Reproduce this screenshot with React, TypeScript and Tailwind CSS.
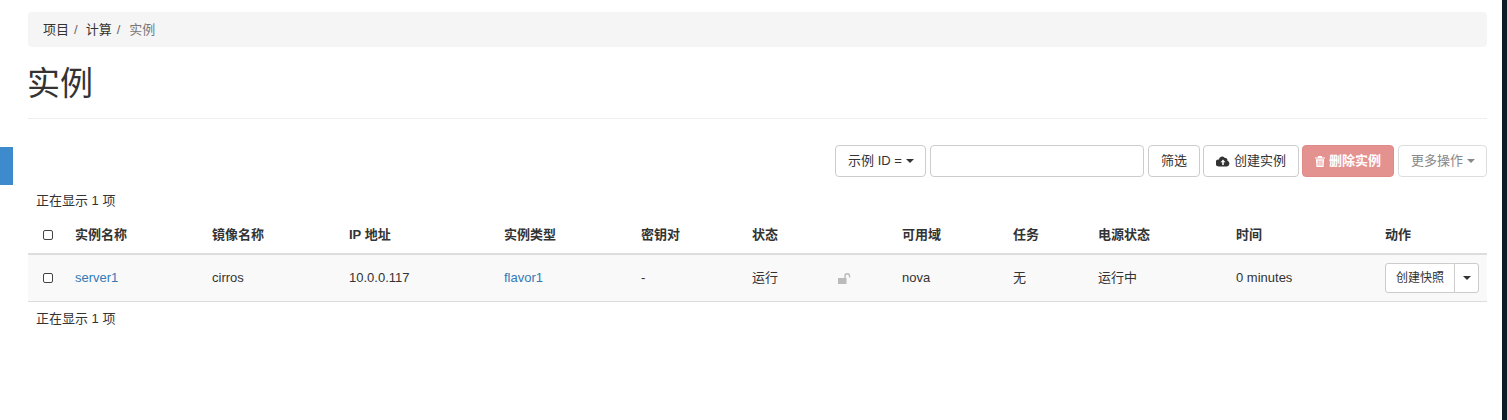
import React from 'react';

const columns = [
  { label: '实例名称', width: 'w-[137px]' },
  { label: '镜像名称', width: 'w-[137px]' },
  { label: 'IP 地址', width: 'w-[155px]' },
  { label: '实例类型', width: 'w-[137px]' },
  { label: '密钥对', width: 'w-[111px]' },
  { label: '状态', width: 'w-[86px]' },
  { label: '', width: 'w-[64px]' },
  { label: '可用域', width: 'w-[111px]' },
  { label: '任务', width: 'w-[85px]' },
  { label: '电源状态', width: 'w-[138px]' },
  { label: '时间', width: 'w-[149px]' },
  { label: '动作', width: 'w-[102px]' },
];

const Caret = ({ className = '' }: { className?: string }) => (
  <span className={`inline-block w-0 h-0 border-x-[4px] border-x-transparent border-t-[4px] ${className}`} />
);

const Checkbox = () => (
  <span className="block w-[10px] h-[10px] border border-[#444] rounded-[2px] bg-white" />
);

const CloudIcon = () => (
  <svg viewBox="0 0 16 12" className="w-[14px] h-[11px]" fill="#333">
    <path d="M13 5.200A3 3 0 0 0 9.800 1.600 3.600 3.600 0 0 0 3.400 3.800 2.900 2.900 0 0 0 3 11.600h9.600A3.300 3.300 0 0 0 13 5.200Z" />
    <path d="M8 3.600 5.200 6.900h1.900v3h1.800v-3h1.900Z" fill="#fff" />
  </svg>
);

const TrashIcon = () => (
  <svg viewBox="0 0 11 12" className="w-[10px] h-[11px]" fill="#fff">
    <path d="M3.600 0h3.800l.7 1.500H11v1.200H0V1.500h2.900Z" />
    <path d="M1 3.400h9l-.6 8.600H1.600ZM3 4.800v5.800h.9V4.800Zm2.100 0v5.800H6V4.800Zm2.100 0v5.800h.9V4.800Z" fillRule="evenodd" />
  </svg>
);

const UnlockIcon = () => (
  <svg viewBox="0 0 13 11" className="w-[13px] h-[11px]" fill="#bbb">
    <path d="M0 5h8.500v6H0Z" />
    <path d="M6.300 5V3.200a3 3 0 0 1 6-.2v1.600h-1.400V3a1.600 1.600 0 0 0-3.200.2V5Z" />
  </svg>
);

export default function App() {
  return (
    <div className="relative h-[420px] bg-white overflow-hidden font-['Liberation_Sans','Noto_Sans_CJK_SC',sans-serif] text-[13px] text-[#333]">
      {/* side tab and the dark window edge */}
      <div className="absolute left-0 top-[147px] w-[13px] h-[38px] bg-[#3d8bcd]" />
      <div className="absolute right-0 top-0 w-[5px] h-full bg-[#0d1b26]" />

      <div className="pl-[28px] pr-[20px] pt-[12px]">
        <div className="flex items-center h-[35px] px-[15px] bg-[#f5f5f5] rounded-[4px]">
          <span>项目</span>
          <span className="text-[#666] ml-[5px] mr-[8px]">/</span>
          <span>计算</span>
          <span className="text-[#666] ml-[5px] mr-[9px]">/</span>
          <span className="text-[#777]">实例</span>
        </div>

        <div className="mt-[13px] pb-[11px] border-b border-[#eee]">
          <h1 className="text-[33px] leading-[47px] font-normal -ml-px">实例</h1>
        </div>

        <div className="flex justify-end items-center gap-[4px] mt-[26px]">
          <button className="flex items-center gap-[4px] h-[32px] pl-[12px] pr-[11px] border border-[#ccc] rounded-[4px] bg-white">
            示例 ID =
            <Caret className="border-t-[#333]" />
          </button>
          <input className="w-[214px] h-[32px] border border-[#ccc] rounded-[4px] bg-white" />
          <button className="h-[32px] px-[12px] border border-[#ccc] rounded-[4px] bg-white">筛选</button>
          <button className="flex items-center gap-[4px] h-[32px] px-[12px] -ml-px border border-[#ccc] rounded-[4px] bg-white">
            <CloudIcon />
            创建实例
          </button>
          <button className="flex items-center gap-[4px] h-[32px] px-[12px] -ml-px rounded-[4px] bg-[#e49290] border border-[#e08a88] text-white font-bold">
            <TrashIcon />
            删除实例
          </button>
          <button className="flex items-center gap-[4px] h-[32px] pl-[12px] pr-[11px] border border-[#ddd] rounded-[4px] bg-white text-[#888]">
            更多操作
            <Caret className="border-t-[#888]" />
          </button>
        </div>

        <div className="pl-[8px] mt-[14px] leading-[19px]">正在显示 1 项</div>

        <div className="mt-[7px]">
          <div className="flex items-center h-[38px] border-b-2 border-[#ddd] font-bold">
            <span className="w-[47px] pl-[15px]"><Checkbox /></span>
            {columns.map((c) => (
              <span key={c.label || 'lock'} className={c.width}>{c.label}</span>
            ))}
          </div>
          <div className="flex items-center h-[47px] border-b border-[#ddd] bg-[#f9f9f9]">
            <span className="w-[47px] pl-[15px]"><Checkbox /></span>
            <span className="w-[137px] text-[#337ab7]">server1</span>
            <span className="w-[137px]">cirros</span>
            <span className="w-[155px]">10.0.0.117</span>
            <span className="w-[137px] text-[#337ab7]">flavor1</span>
            <span className="w-[111px]">-</span>
            <span className="w-[86px]">运行</span>
            <span className="w-[64px]"><UnlockIcon /></span>
            <span className="w-[111px]">nova</span>
            <span className="w-[85px]">无</span>
            <span className="w-[138px]">运行中</span>
            <span className="w-[149px]">0 minutes</span>
            <span className="flex w-[102px] h-[30px] text-[12px]">
              <span className="flex items-center px-[10px] border border-[#ccc] rounded-l-[3px] bg-white">创建快照</span>
              <span className="flex items-center pl-[8px] pr-[7px] -ml-px border border-[#ccc] rounded-r-[3px] bg-white">
                <Caret className="border-t-[#333]" />
              </span>
            </span>
          </div>
        </div>

        <div className="pl-[8px] mt-[7px] leading-[19px]">正在显示 1 项</div>
      </div>
    </div>
  );
}
